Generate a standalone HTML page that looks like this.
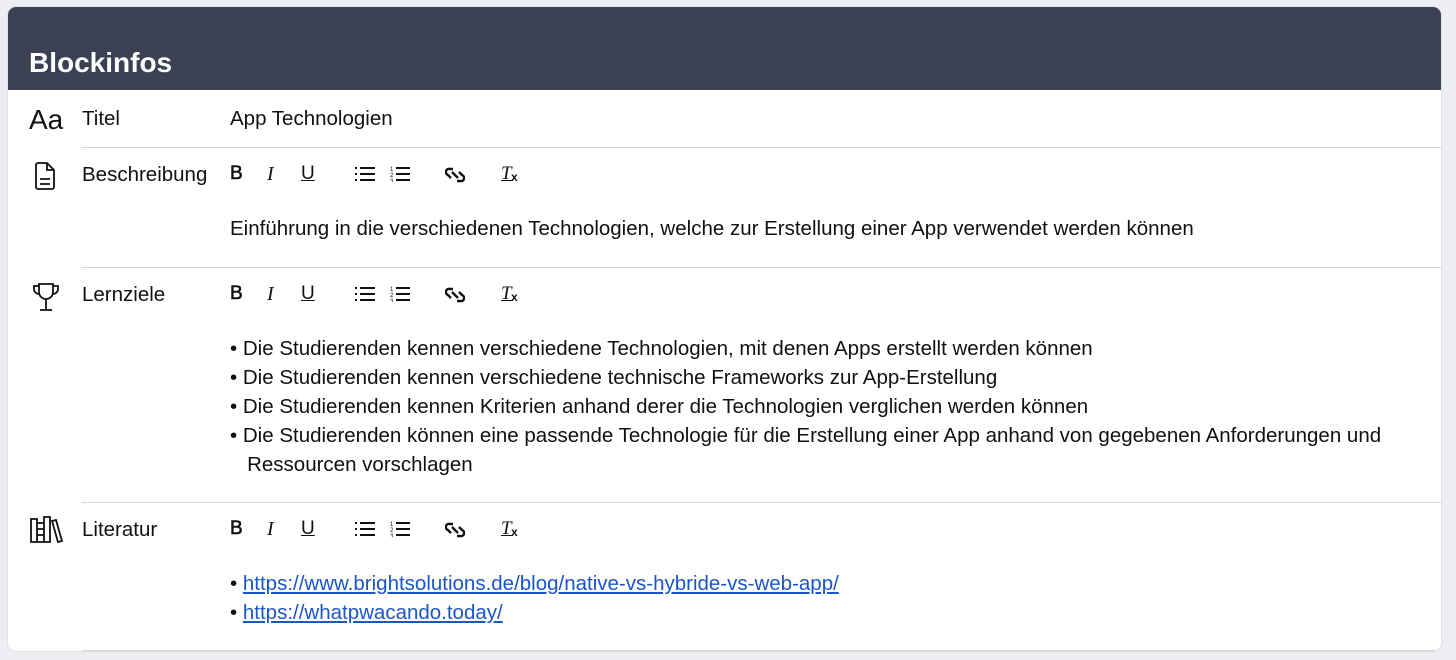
<!DOCTYPE html>
<html><head><meta charset="utf-8"><style>
body{margin:0;width:1456px;height:660px;background:#eceef1;font-family:"Liberation Sans",sans-serif;color:#111;position:relative;overflow:hidden}
.card{position:absolute;left:8px;top:7px;width:1433px;height:644px;background:#fff;border-radius:8px;overflow:hidden;box-shadow:0 0 2px rgba(0,0,0,.15)}
.hd{position:absolute;left:0;top:0;right:0;height:83px;background:#3b4052}
.hd span{position:absolute;left:21px;top:40px;color:#fff;font-weight:bold;font-size:28px}
.a{position:absolute;font-size:20.5px;white-space:nowrap}
.line{position:absolute;left:74px;right:0;height:1px;background:#d4d4d4}
.tb{position:absolute;left:222px;height:22px}
.tb b,.tb i,.tb u{position:absolute;font-size:19px;top:0}
svg{position:absolute}
a{color:#1a56c9}
</style></head><body>
<div class="card">
<div class="hd"><span>Blockinfos</span></div>
<div class="a" style="left:21px;top:97px;font-size:28px">Aa</div>
<div class="a" style="left:74px;top:100px">Titel</div>
<div class="a" style="left:222px;top:100px">App Technologien</div>
<div class="line" style="top:140px"></div>

<svg style="left:26px;top:155px" width="22" height="28" viewBox="0 0 22 28" fill="none" stroke="#111" stroke-width="1.8"><path d="M2 3a2 2 0 0 1 2-2h9l7 7v17a2 2 0 0 1-2 2H4a2 2 0 0 1-2-2z M13 1v7h7 M6 17h10 M6 22h10"/></svg>
<div class="a" style="left:74px;top:156px">Beschreibung</div>
<div class="a" style="left:222px;top:210px">Einführung in die verschiedenen Technologien, welche zur Erstellung einer App verwendet werden können</div>
<div class="line" style="top:260px"></div>

<svg style="left:24px;top:275px" width="28" height="30" viewBox="0 0 28 30" fill="none" stroke="#111" stroke-width="1.8"><path d="M7 2h14v8a7 7 0 0 1-14 0z M7 4H2v3a5 5 0 0 0 5 5 M21 4h5v3a5 5 0 0 1-5 5 M14 17v10 M8 28h12"/></svg>
<div class="a" style="left:74px;top:276px">Lernziele</div>
<div class="a" style="left:222px;top:327px;line-height:29px">• Die Studierenden kennen verschiedene Technologien, mit denen Apps erstellt werden können<br>• Die Studierenden kennen verschiedene technische Frameworks zur App-Erstellung<br>• Die Studierenden kennen Kriterien anhand derer die Technologien verglichen werden können<br>• Die Studierenden können eine passende Technologie für die Erstellung einer App anhand von gegebenen Anforderungen und<br>&nbsp;&nbsp;&nbsp;Ressourcen vorschlagen</div>
<div class="line" style="top:495px"></div>

<svg style="left:21px;top:508px" width="34" height="28" viewBox="0 0 34 28" fill="none" stroke="#111" stroke-width="1.8"><path d="M2 4h6v23H2z M8 8h7v19H8z M8 14h7 M8 20h7 M15 2h6v25h-6z M23 6l4-1 6 21-4 1z"/></svg>
<div class="a" style="left:74px;top:511px">Literatur</div>
<div class="a" style="left:222px;top:562px;line-height:29px">• <a href="#">https://www.brightsolutions.de/blog/native-vs-hybride-vs-web-app/</a><br>• <a href="#">https://whatpwacando.today/</a></div>
<div class="line" style="top:643px"></div>

<div class="tb" style="top:156px">
<b style="left:0;font-weight:normal;-webkit-text-stroke:0.6px #111">B</b><i style="left:37px;font-family:'Liberation Serif',serif;font-size:20px">I</i><u style="left:71px">U</u>
<svg style="left:125px;top:3px" width="20" height="16" viewBox="0 0 20 16" stroke="#111" stroke-width="2"><path d="M0 2h2M0 8h2M0 14h2M5 2h15M5 8h15M5 14h15"/></svg>
<svg style="left:160px;top:3px" width="20" height="16" viewBox="0 0 20 16" stroke="#111" stroke-width="2"><path d="M6 2h14M6 8h14M6 14h14"/><text x="0" y="5" font-size="6" stroke="none" fill="#111">1</text><text x="0" y="11" font-size="6" stroke="none" fill="#111">2</text><text x="0" y="17" font-size="6" stroke="none" fill="#111">3</text></svg>
<svg style="left:215px;top:2px" width="20" height="20" viewBox="0 0 20 20" fill="none" stroke="#111" stroke-width="2.4"><path d="M8 4l-3 0a3 3 0 0 0-2 6l3 3M12 16l3 0a3 3 0 0 0 2-6l-3-3M7 7l6 6"/></svg>
<i style="left:271px;font-family:'Liberation Serif',serif;font-size:19px;text-decoration:underline">T</i><b style="left:281px;top:7px;font-size:12px">x</b>
</div>
</div>
<script>
const t=document.querySelector('.tb');
[276,511].forEach(y=>{const c=t.cloneNode(true);c.style.top=y+'px';t.parentNode.appendChild(c)});
</script>
</body></html>
